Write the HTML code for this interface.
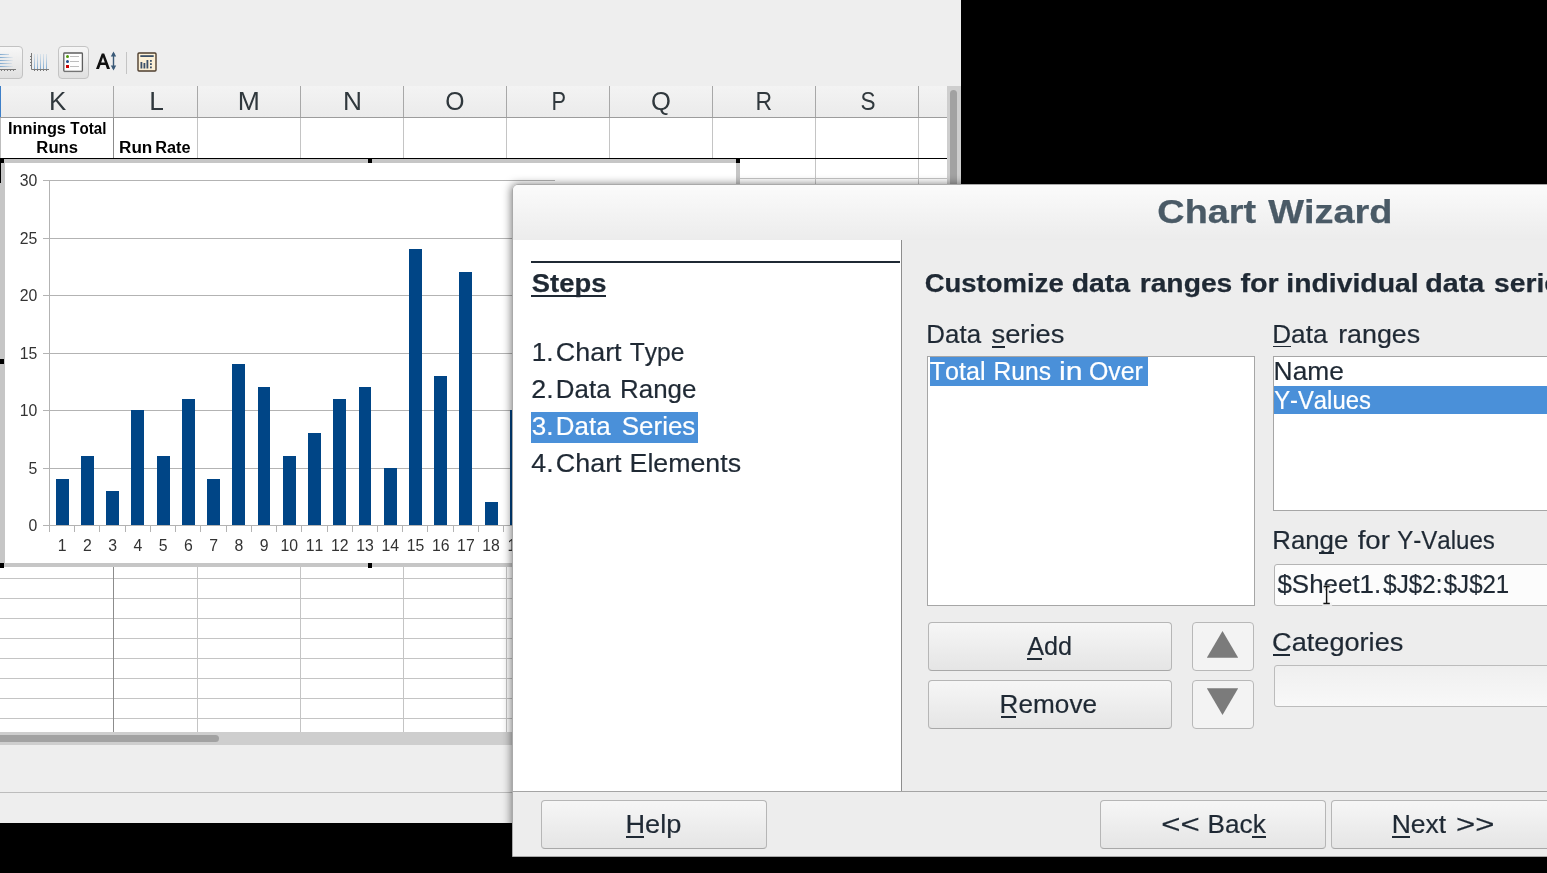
<!DOCTYPE html><html><head><meta charset="utf-8"><title>Chart Wizard</title><style>

*{box-sizing:border-box}
html,body{margin:0;padding:0}
body{width:1547px;height:873px;position:relative;overflow:hidden;background:#000;font-family:"Liberation Sans",sans-serif}
.a{position:absolute}
svg text{font-family:"Liberation Sans",sans-serif;font-kerning:none;white-space:pre}
.gl{will-change:transform}

</style></head><body>
<div class="a" style="left:0;top:0;width:961px;height:823px;background:#eeeeee"></div>
<div class="a" style="left:-10px;top:46px;width:33px;height:33px;border:1px solid #c2c2c2;border-radius:4px;background:linear-gradient(#f7f7f7,#e0e0e0)"></div>
<svg class="a" style="left:0;top:52px" width="20" height="22"><defs><linearGradient id="gh" gradientUnits="userSpaceOnUse" x1="0" x2="14" y1="0" y2="0"><stop offset="0" stop-color="#7fa9cf"/><stop offset="1" stop-color="#7fa9cf" stop-opacity="0"/></linearGradient></defs><g stroke="url(#gh)" stroke-width="1.1"><line x1="0" y1="2.5" x2="9" y2="2.5"/><line x1="0" y1="5.5" x2="13" y2="5.5"/><line x1="0" y1="8.5" x2="13" y2="8.5"/><line x1="0" y1="11.5" x2="12" y2="11.5"/><line x1="0" y1="14.5" x2="13" y2="14.5"/></g><path d="M0 17.5 H16 M1.5 17.5 V19 M4.5 17.5 V19 M7.5 17.5 V19 M10.5 17.5 V19 M13.5 17.5 V19" fill="none" stroke="#7a7a7a" stroke-width="1"/></svg>
<svg class="a" style="left:30px;top:53px" width="20" height="19"><defs><linearGradient id="gv" gradientUnits="userSpaceOnUse" x1="0" x2="0" y1="1" y2="16"><stop offset="0" stop-color="#a9c7e0" stop-opacity="0.3"/><stop offset="1" stop-color="#7fa9cf"/></linearGradient></defs><g stroke="url(#gv)" stroke-width="1"><line x1="4.5" y1="1" x2="4.5" y2="16"/><line x1="7.5" y1="1" x2="7.5" y2="16"/><line x1="10.5" y1="1" x2="10.5" y2="16"/><line x1="13.5" y1="1" x2="13.5" y2="16"/><line x1="16.5" y1="1" x2="16.5" y2="16"/></g><path d="M1.5 0 V16.5 H19 M0 3.5 H1.5 M0 6.5 H1.5 M0 9.5 H1.5 M0 12.5 H1.5 M4.5 16.5 V18 M7.5 16.5 V18 M10.5 16.5 V18 M13.5 16.5 V18 M16.5 16.5 V18" fill="none" stroke="#7a7a7a" stroke-width="1"/></svg>
<div class="a" style="left:58px;top:46px;width:31px;height:33px;border:1px solid #c4c4c4;border-radius:4px;background:linear-gradient(#f6f6f6,#e0e0e0)"></div>
<svg class="a" style="left:63px;top:52px" width="21" height="21"><rect x="0.8" y="1" width="18.6" height="18.4" rx="0.8" fill="#fdfdfd" stroke="#5e5e5e" stroke-width="1.3"/><line x1="1" y1="19.6" x2="19" y2="19.6" stroke="#777" stroke-width="1"/><circle cx="4.5" cy="4.5" r="1.5" fill="#4e9a06"/><circle cx="4.5" cy="9.5" r="1.5" fill="#204a87"/><rect x="3" y="13" width="3" height="3" fill="#cc0000"/><g stroke="#b4b4b4" stroke-width="0.9"><line x1="7" y1="4.5" x2="16" y2="4.5"/><line x1="7" y1="9.5" x2="16" y2="9.5"/><line x1="7" y1="14.5" x2="16" y2="14.5"/></g></svg>
<svg class="a" style="left:94px;top:50px" width="26" height="24"><path d="M2 19 L7.8 3.6 H10.2 L16 19 H13 L11.6 15 H6.4 L5 19 Z M7.2 12.6 H10.8 L9 7.2 Z" fill="#111"/><path d="M19.5 3 V19" stroke="#3b5a78" stroke-width="1.4"/><path d="M16.8 6.5 L19.5 1.5 L22.2 6.5 Z M16.8 15.5 L19.5 20.5 L22.2 15.5 Z" fill="#3b5a78"/></svg>
<div class="a" style="left:126px;top:52px;width:1px;height:22px;background:#c4c4c4"></div>
<svg class="a" style="left:137px;top:52px" width="20" height="20"><rect x="1" y="1" width="18" height="18" rx="1" fill="#fcf0d6" stroke="#4e3e2e" stroke-width="1.4"/><rect x="3.3" y="3.2" width="13.4" height="1.8" fill="#3b5068"/><rect x="3.5" y="10" width="1.8" height="6.5" fill="#3b5068"/><rect x="6.5" y="11" width="1.8" height="5.5" fill="#3b5068"/><rect x="9.5" y="8" width="1.8" height="8.5" fill="#3b5068"/><rect x="13" y="8" width="1.8" height="1.8" fill="#3b5068"/><rect x="13" y="11.2" width="1.8" height="1.8" fill="#3b5068"/><rect x="13" y="14.5" width="1.8" height="1.8" fill="#3b5068"/></svg>
<div class="a" style="left:0;top:86px;width:947px;height:31px;background:linear-gradient(#f3f3f3,#ebebeb)"></div>
<div class="a" style="left:0;top:117px;width:947px;height:1px;background:#9c9c9c"></div>
<div class="a" style="left:0;top:86px;width:1px;height:31px;background:#3d7fc8"></div>
<div class="a" style="left:113px;top:86px;width:1px;height:31px;background:#a8a8a8"></div>
<div class="a" style="left:197px;top:86px;width:1px;height:31px;background:#a8a8a8"></div>
<div class="a" style="left:300px;top:86px;width:1px;height:31px;background:#a8a8a8"></div>
<div class="a" style="left:403px;top:86px;width:1px;height:31px;background:#a8a8a8"></div>
<div class="a" style="left:506px;top:86px;width:1px;height:31px;background:#a8a8a8"></div>
<div class="a" style="left:609px;top:86px;width:1px;height:31px;background:#a8a8a8"></div>
<div class="a" style="left:712px;top:86px;width:1px;height:31px;background:#a8a8a8"></div>
<div class="a" style="left:815px;top:86px;width:1px;height:31px;background:#a8a8a8"></div>
<div class="a" style="left:918px;top:86px;width:1px;height:31px;background:#a8a8a8"></div>
<div class="a" style="left:0;top:118px;width:947px;height:614px;background:#fff"></div>
<div class="a" style="left:0;top:178px;width:947px;height:1px;background:#c4c4c4"></div>
<div class="a" style="left:0;top:198px;width:947px;height:1px;background:#c4c4c4"></div>
<div class="a" style="left:0;top:578px;width:947px;height:1px;background:#c4c4c4"></div>
<div class="a" style="left:0;top:598px;width:947px;height:1px;background:#c4c4c4"></div>
<div class="a" style="left:0;top:618px;width:947px;height:1px;background:#c4c4c4"></div>
<div class="a" style="left:0;top:638px;width:947px;height:1px;background:#c4c4c4"></div>
<div class="a" style="left:0;top:658px;width:947px;height:1px;background:#c4c4c4"></div>
<div class="a" style="left:0;top:678px;width:947px;height:1px;background:#c4c4c4"></div>
<div class="a" style="left:0;top:698px;width:947px;height:1px;background:#c4c4c4"></div>
<div class="a" style="left:0;top:718px;width:947px;height:1px;background:#c4c4c4"></div>
<div class="a" style="left:113px;top:118px;width:1px;height:614px;background:#8c8c8c"></div>
<div class="a" style="left:197px;top:118px;width:1px;height:614px;background:#c4c4c4"></div>
<div class="a" style="left:300px;top:118px;width:1px;height:614px;background:#c4c4c4"></div>
<div class="a" style="left:403px;top:118px;width:1px;height:614px;background:#c4c4c4"></div>
<div class="a" style="left:506px;top:118px;width:1px;height:614px;background:#c4c4c4"></div>
<div class="a" style="left:609px;top:118px;width:1px;height:614px;background:#c4c4c4"></div>
<div class="a" style="left:712px;top:118px;width:1px;height:614px;background:#c4c4c4"></div>
<div class="a" style="left:815px;top:118px;width:1px;height:614px;background:#c4c4c4"></div>
<div class="a" style="left:918px;top:118px;width:1px;height:614px;background:#c4c4c4"></div>
<div class="a" style="left:0;top:158px;width:947px;height:1px;background:#000"></div>
<div class="a" style="left:947px;top:86px;width:14px;height:659px;background:#cecece"></div>
<div class="a" style="left:950px;top:90px;width:7px;height:660px;border-radius:4px;background:#a2a2a2"></div>
<div class="a" style="left:0;top:732px;width:947px;height:13px;background:#cecece"></div>
<div class="a" style="left:-5px;top:735px;width:224px;height:7px;border-radius:4px;background:#a2a2a2"></div>
<div class="a" style="left:0;top:792px;width:961px;height:1px;background:#bcbcbc"></div>
<div class="a" style="left:0;top:159px;width:740px;height:408px;background:#c6c6c6"></div>
<div class="a" style="left:5px;top:163px;width:731px;height:400px;background:#fff"></div>
<div class="a" style="left:0px;top:158px;width:4px;height:5px;background:#000"></div>
<div class="a" style="left:368px;top:158px;width:4px;height:5px;background:#000"></div>
<div class="a" style="left:736px;top:158px;width:4px;height:5px;background:#000"></div>
<div class="a" style="left:0px;top:359px;width:4px;height:5px;background:#000"></div>
<div class="a" style="left:0px;top:563px;width:4px;height:5px;background:#000"></div>
<div class="a" style="left:368px;top:563px;width:4px;height:5px;background:#000"></div>
<div class="a" style="left:0;top:158px;width:1px;height:25px;background:#000"></div>
<div class="a" style="left:0;top:118px;width:1px;height:40px;background:#bdbdbd"></div>
<div class="a" style="left:43px;top:525px;width:512px;height:1px;background:#b3b3b3"></div>
<div class="a" style="left:43px;top:468px;width:512px;height:1px;background:#b3b3b3"></div>
<div class="a" style="left:43px;top:410px;width:512px;height:1px;background:#b3b3b3"></div>
<div class="a" style="left:43px;top:353px;width:512px;height:1px;background:#b3b3b3"></div>
<div class="a" style="left:43px;top:295px;width:512px;height:1px;background:#b3b3b3"></div>
<div class="a" style="left:43px;top:238px;width:512px;height:1px;background:#b3b3b3"></div>
<div class="a" style="left:43px;top:180px;width:512px;height:1px;background:#b3b3b3"></div>
<div class="a" style="left:49px;top:180px;width:1px;height:352px;background:#b3b3b3"></div>
<div class="a" style="left:49.00px;top:525px;width:1px;height:7px;background:#b3b3b3"></div>
<div class="a" style="left:55.80px;top:479.00px;width:12.8px;height:46.00px;background:#004586"></div>
<div class="a" style="left:74.23px;top:525px;width:1px;height:7px;background:#b3b3b3"></div>
<div class="a" style="left:81.03px;top:456.00px;width:12.8px;height:69.00px;background:#004586"></div>
<div class="a" style="left:99.46px;top:525px;width:1px;height:7px;background:#b3b3b3"></div>
<div class="a" style="left:106.26px;top:490.50px;width:12.8px;height:34.50px;background:#004586"></div>
<div class="a" style="left:124.69px;top:525px;width:1px;height:7px;background:#b3b3b3"></div>
<div class="a" style="left:131.49px;top:410.00px;width:12.8px;height:115.00px;background:#004586"></div>
<div class="a" style="left:149.92px;top:525px;width:1px;height:7px;background:#b3b3b3"></div>
<div class="a" style="left:156.72px;top:456.00px;width:12.8px;height:69.00px;background:#004586"></div>
<div class="a" style="left:175.15px;top:525px;width:1px;height:7px;background:#b3b3b3"></div>
<div class="a" style="left:181.95px;top:398.50px;width:12.8px;height:126.50px;background:#004586"></div>
<div class="a" style="left:200.38px;top:525px;width:1px;height:7px;background:#b3b3b3"></div>
<div class="a" style="left:207.18px;top:479.00px;width:12.8px;height:46.00px;background:#004586"></div>
<div class="a" style="left:225.61px;top:525px;width:1px;height:7px;background:#b3b3b3"></div>
<div class="a" style="left:232.41px;top:364.00px;width:12.8px;height:161.00px;background:#004586"></div>
<div class="a" style="left:250.84px;top:525px;width:1px;height:7px;background:#b3b3b3"></div>
<div class="a" style="left:257.64px;top:387.00px;width:12.8px;height:138.00px;background:#004586"></div>
<div class="a" style="left:276.07px;top:525px;width:1px;height:7px;background:#b3b3b3"></div>
<div class="a" style="left:282.87px;top:456.00px;width:12.8px;height:69.00px;background:#004586"></div>
<div class="a" style="left:301.30px;top:525px;width:1px;height:7px;background:#b3b3b3"></div>
<div class="a" style="left:308.10px;top:433.00px;width:12.8px;height:92.00px;background:#004586"></div>
<div class="a" style="left:326.53px;top:525px;width:1px;height:7px;background:#b3b3b3"></div>
<div class="a" style="left:333.33px;top:398.50px;width:12.8px;height:126.50px;background:#004586"></div>
<div class="a" style="left:351.76px;top:525px;width:1px;height:7px;background:#b3b3b3"></div>
<div class="a" style="left:358.56px;top:387.00px;width:12.8px;height:138.00px;background:#004586"></div>
<div class="a" style="left:376.99px;top:525px;width:1px;height:7px;background:#b3b3b3"></div>
<div class="a" style="left:383.79px;top:467.50px;width:12.8px;height:57.50px;background:#004586"></div>
<div class="a" style="left:402.22px;top:525px;width:1px;height:7px;background:#b3b3b3"></div>
<div class="a" style="left:409.02px;top:249.00px;width:12.8px;height:276.00px;background:#004586"></div>
<div class="a" style="left:427.45px;top:525px;width:1px;height:7px;background:#b3b3b3"></div>
<div class="a" style="left:434.25px;top:375.50px;width:12.8px;height:149.50px;background:#004586"></div>
<div class="a" style="left:452.68px;top:525px;width:1px;height:7px;background:#b3b3b3"></div>
<div class="a" style="left:459.48px;top:272.00px;width:12.8px;height:253.00px;background:#004586"></div>
<div class="a" style="left:477.91px;top:525px;width:1px;height:7px;background:#b3b3b3"></div>
<div class="a" style="left:484.71px;top:502.00px;width:12.8px;height:23.00px;background:#004586"></div>
<div class="a" style="left:503.14px;top:525px;width:1px;height:7px;background:#b3b3b3"></div>
<div class="a" style="left:509.94px;top:410.00px;width:12.8px;height:115.00px;background:#004586"></div>
<div class="a" style="left:528.37px;top:525px;width:1px;height:7px;background:#b3b3b3"></div>
<div class="a" style="left:535.17px;top:410.00px;width:12.8px;height:115.00px;background:#004586"></div>
<svg class="a gl" style="left:0;top:0" width="961" height="823"><text x="49.07" y="110.00" font-size="26" font-weight="normal" fill="#30383d" textLength="17.26" lengthAdjust="spacingAndGlyphs" >K</text><text x="149.32" y="110.00" font-size="26" font-weight="normal" fill="#30383d" textLength="14.63" lengthAdjust="spacingAndGlyphs" >L</text><text x="237.81" y="110.00" font-size="26" font-weight="normal" fill="#30383d" textLength="22.12" lengthAdjust="spacingAndGlyphs" >M</text><text x="342.93" y="110.00" font-size="26" font-weight="normal" fill="#30383d" textLength="18.97" lengthAdjust="spacingAndGlyphs" >N</text><text x="445.22" y="110.00" font-size="26" font-weight="normal" fill="#30383d" textLength="19.25" lengthAdjust="spacingAndGlyphs" >O</text><text x="551.60" y="110.00" font-size="26" font-weight="normal" fill="#30383d" textLength="14.54" lengthAdjust="spacingAndGlyphs" >P</text><text x="651.08" y="110.00" font-size="26" font-weight="normal" fill="#30383d" textLength="19.94" lengthAdjust="spacingAndGlyphs" >Q</text><text x="755.41" y="110.00" font-size="26" font-weight="normal" fill="#30383d" textLength="16.58" lengthAdjust="spacingAndGlyphs" >R</text><text x="860.59" y="110.00" font-size="26" font-weight="normal" fill="#30383d" textLength="15.03" lengthAdjust="spacingAndGlyphs" >S</text><text x="7.90" y="133.90" font-size="16" font-weight="bold" fill="#000" textLength="58.06" lengthAdjust="spacingAndGlyphs" >Innings</text><text x="70.35" y="133.90" font-size="16" font-weight="bold" fill="#000" textLength="36.09" lengthAdjust="spacingAndGlyphs" >Total</text><text x="36.38" y="152.60" font-size="16" font-weight="bold" fill="#000" textLength="41.59" lengthAdjust="spacingAndGlyphs" >Runs</text><text x="119.04" y="152.60" font-size="16" font-weight="bold" fill="#000" textLength="33.28" lengthAdjust="spacingAndGlyphs" >Run</text><text x="155.30" y="152.60" font-size="16" font-weight="bold" fill="#000" textLength="35.23" lengthAdjust="spacingAndGlyphs" >Rate</text><text x="37.40" y="531.00" font-size="15.8" font-weight="normal" fill="#333" text-anchor="end">0</text><text x="37.40" y="473.50" font-size="15.8" font-weight="normal" fill="#333" text-anchor="end">5</text><text x="37.40" y="416.00" font-size="15.8" font-weight="normal" fill="#333" text-anchor="end">10</text><text x="37.40" y="358.50" font-size="15.8" font-weight="normal" fill="#333" text-anchor="end">15</text><text x="37.40" y="301.00" font-size="15.8" font-weight="normal" fill="#333" text-anchor="end">20</text><text x="37.40" y="243.50" font-size="15.8" font-weight="normal" fill="#333" text-anchor="end">25</text><text x="37.40" y="186.00" font-size="15.8" font-weight="normal" fill="#333" text-anchor="end">30</text><text x="62.22" y="550.90" font-size="15.8" font-weight="normal" fill="#333" text-anchor="middle">1</text><text x="87.44" y="550.90" font-size="15.8" font-weight="normal" fill="#333" text-anchor="middle">2</text><text x="112.67" y="550.90" font-size="15.8" font-weight="normal" fill="#333" text-anchor="middle">3</text><text x="137.91" y="550.90" font-size="15.8" font-weight="normal" fill="#333" text-anchor="middle">4</text><text x="163.14" y="550.90" font-size="15.8" font-weight="normal" fill="#333" text-anchor="middle">5</text><text x="188.37" y="550.90" font-size="15.8" font-weight="normal" fill="#333" text-anchor="middle">6</text><text x="213.59" y="550.90" font-size="15.8" font-weight="normal" fill="#333" text-anchor="middle">7</text><text x="238.83" y="550.90" font-size="15.8" font-weight="normal" fill="#333" text-anchor="middle">8</text><text x="264.06" y="550.90" font-size="15.8" font-weight="normal" fill="#333" text-anchor="middle">9</text><text x="289.29" y="550.90" font-size="15.8" font-weight="normal" fill="#333" text-anchor="middle">10</text><text x="314.52" y="550.90" font-size="15.8" font-weight="normal" fill="#333" text-anchor="middle">11</text><text x="339.75" y="550.90" font-size="15.8" font-weight="normal" fill="#333" text-anchor="middle">12</text><text x="364.98" y="550.90" font-size="15.8" font-weight="normal" fill="#333" text-anchor="middle">13</text><text x="390.21" y="550.90" font-size="15.8" font-weight="normal" fill="#333" text-anchor="middle">14</text><text x="415.44" y="550.90" font-size="15.8" font-weight="normal" fill="#333" text-anchor="middle">15</text><text x="440.67" y="550.90" font-size="15.8" font-weight="normal" fill="#333" text-anchor="middle">16</text><text x="465.90" y="550.90" font-size="15.8" font-weight="normal" fill="#333" text-anchor="middle">17</text><text x="491.13" y="550.90" font-size="15.8" font-weight="normal" fill="#333" text-anchor="middle">18</text><text x="516.36" y="550.90" font-size="15.8" font-weight="normal" fill="#333" text-anchor="middle">19</text><text x="541.59" y="550.90" font-size="15.8" font-weight="normal" fill="#333" text-anchor="middle">20</text></svg>
<div class="a" style="left:512px;top:184px;width:1100px;height:673px;border-radius:6px 6px 0 0;box-shadow:-1px 0 9px 0 rgba(0,0,0,0.5)"></div>
<div class="a" style="left:512px;top:184px;width:1100px;height:673px;border-radius:6px 6px 0 0;background:#ededed;border:1px solid #a9a9a9;overflow:hidden">
<div class="a" style="left:0;top:0;width:1100px;height:55px;background:linear-gradient(#fbfbfb,#ececec)"></div>
</div>
<div class="a" style="left:513px;top:240px;width:389px;height:551px;background:#fff;border-right:1px solid #8e8e8e"></div>
<div class="a" style="left:513px;top:791px;width:1040px;height:1px;background:#a4a4a4"></div>
<div class="a" style="left:531px;top:261px;width:369px;height:2px;background:#1f2934"></div>
<div class="a" style="left:531px;top:295px;width:75px;height:2px;background:#1f2934"></div>
<div class="a" style="left:531px;top:412px;width:167px;height:31px;background:#4a90d9"></div>
<div class="a" style="left:927px;top:356px;width:328px;height:250px;background:#fff;border:1px solid #a6a6a6"></div>
<div class="a" style="left:930px;top:357px;width:218px;height:29px;background:#4a90d9"></div>
<div class="a" style="left:1273px;top:356px;width:300px;height:155px;background:#fff;border:1px solid #a6a6a6"></div>
<div class="a" style="left:1274px;top:386px;width:300px;height:28px;background:#4a90d9"></div>
<div class="a" style="left:1274px;top:564px;width:300px;height:42px;background:#fcfcfc;border:1px solid #b4b4b4;border-radius:3px"></div>
<div class="a" style="left:1274px;top:665px;width:300px;height:42px;background:linear-gradient(#efefef,#f8f8f8);border:1px solid #bcbcbc;border-radius:3px"></div>
<div class="a" style="left:928px;top:622px;width:244px;height:49px;border:1px solid #b6b6b6;border-bottom-color:#a8a8a8;border-radius:4px;background:linear-gradient(#f6f6f6,#e5e5e5)"></div>
<div class="a" style="left:928px;top:680px;width:244px;height:49px;border:1px solid #b6b6b6;border-bottom-color:#a8a8a8;border-radius:4px;background:linear-gradient(#f6f6f6,#e5e5e5)"></div>
<div class="a" style="left:1192px;top:622px;width:62px;height:49px;border:1px solid #b8b8b8;border-radius:4px;background:#f3f3f3"></div>
<svg class="a" style="left:1206px;top:630px" width="33" height="29"><path d="M0.8 27.8 L16.5 1 L32.2 27.8 Z" fill="#7b7b7b"/></svg>
<div class="a" style="left:1192px;top:680px;width:62px;height:49px;border:1px solid #b8b8b8;border-radius:4px;background:#f3f3f3"></div>
<svg class="a" style="left:1206px;top:687px" width="33" height="29"><path d="M0.8 1.2 L16.5 28 L32.2 1.2 Z" fill="#7b7b7b"/></svg>
<div class="a" style="left:541px;top:800px;width:226px;height:49px;border:1px solid #b6b6b6;border-bottom-color:#a8a8a8;border-radius:4px;background:linear-gradient(#f6f6f6,#e5e5e5)"></div>
<div class="a" style="left:1100px;top:800px;width:226px;height:49px;border:1px solid #b6b6b6;border-bottom-color:#a8a8a8;border-radius:4px;background:linear-gradient(#f6f6f6,#e5e5e5)"></div>
<div class="a" style="left:1331px;top:800px;width:226px;height:49px;border:1px solid #b6b6b6;border-bottom-color:#a8a8a8;border-radius:4px;background:linear-gradient(#f6f6f6,#e5e5e5)"></div>
<div class="a" style="left:992.3px;top:346.1px;width:12.7px;height:1.7px;background:#1f2934"></div>
<div class="a" style="left:1273.2px;top:345.8px;width:17.6px;height:1.7px;background:#1f2934"></div>
<div class="a" style="left:1319.1px;top:552.2px;width:14.9px;height:1.7px;background:#1f2934"></div>
<div class="a" style="left:1272.9px;top:654.3px;width:17.2px;height:1.7px;background:#1f2934"></div>
<div class="a" style="left:1027.2px;top:657.9px;width:14.8px;height:1.7px;background:#1f2934"></div>
<div class="a" style="left:1000.9px;top:716.0px;width:14.7px;height:1.7px;background:#1f2934"></div>
<div class="a" style="left:626.1px;top:836.0px;width:17.9px;height:1.7px;background:#1f2934"></div>
<div class="a" style="left:1252.1px;top:836.1px;width:13.9px;height:1.7px;background:#1f2934"></div>
<div class="a" style="left:1392.2px;top:836.1px;width:17.6px;height:1.7px;background:#1f2934"></div>
<svg class="a gl" style="left:0;top:0" width="1547" height="873"><defs><clipPath id="c1"><rect x="929" y="356" width="219" height="30"/></clipPath></defs><text x="1157.39" y="222.90" font-size="33" font-weight="bold" fill="#4a5a66" stroke="#4a5a66" stroke-width="0.25" textLength="98.79" lengthAdjust="spacingAndGlyphs" >Chart</text><text x="1268.20" y="222.90" font-size="33" font-weight="bold" fill="#4a5a66" stroke="#4a5a66" stroke-width="0.25" textLength="124.36" lengthAdjust="spacingAndGlyphs" >Wizard</text><text x="531.85" y="291.90" font-size="25" font-weight="bold" fill="#1f2934" stroke="#1f2934" stroke-width="0.25" textLength="74.55" lengthAdjust="spacingAndGlyphs" >Steps</text><text x="531.73" y="360.80" font-size="25.5" font-weight="normal" fill="#1f2934" stroke="#1f2934" stroke-width="0.2" textLength="21.83" lengthAdjust="spacingAndGlyphs" >1.</text><text x="555.85" y="360.80" font-size="25.5" font-weight="normal" fill="#1f2934" stroke="#1f2934" stroke-width="0.2" textLength="65.75" lengthAdjust="spacingAndGlyphs" >Chart</text><text x="629.65" y="360.80" font-size="25.5" font-weight="normal" fill="#1f2934" stroke="#1f2934" stroke-width="0.2" textLength="54.68" lengthAdjust="spacingAndGlyphs" >Type</text><text x="531.26" y="397.80" font-size="25.5" font-weight="normal" fill="#1f2934" stroke="#1f2934" stroke-width="0.2" textLength="22.36" lengthAdjust="spacingAndGlyphs" >2.</text><text x="555.86" y="397.80" font-size="25.5" font-weight="normal" fill="#1f2934" stroke="#1f2934" stroke-width="0.2" textLength="54.67" lengthAdjust="spacingAndGlyphs" >Data</text><text x="620.06" y="397.80" font-size="25.5" font-weight="normal" fill="#1f2934" stroke="#1f2934" stroke-width="0.2" textLength="76.34" lengthAdjust="spacingAndGlyphs" >Range</text><text x="531.82" y="434.70" font-size="25.5" font-weight="normal" fill="#fff" stroke="#fff" stroke-width="0.2" textLength="21.73" lengthAdjust="spacingAndGlyphs" >3.</text><text x="555.86" y="434.70" font-size="25.5" font-weight="normal" fill="#fff" stroke="#fff" stroke-width="0.2" textLength="54.67" lengthAdjust="spacingAndGlyphs" >Data</text><text x="621.83" y="434.70" font-size="25.5" font-weight="normal" fill="#fff" stroke="#fff" stroke-width="0.2" textLength="73.48" lengthAdjust="spacingAndGlyphs" >Series</text><text x="531.30" y="471.50" font-size="25.5" font-weight="normal" fill="#1f2934" stroke="#1f2934" stroke-width="0.2" textLength="22.32" lengthAdjust="spacingAndGlyphs" >4.</text><text x="555.85" y="471.50" font-size="25.5" font-weight="normal" fill="#1f2934" stroke="#1f2934" stroke-width="0.2" textLength="65.75" lengthAdjust="spacingAndGlyphs" >Chart</text><text x="629.59" y="471.50" font-size="25.5" font-weight="normal" fill="#1f2934" stroke="#1f2934" stroke-width="0.2" textLength="111.44" lengthAdjust="spacingAndGlyphs" >Elements</text><text x="924.70" y="291.60" font-size="25" font-weight="bold" fill="#1f2934" stroke="#1f2934" stroke-width="0.25" textLength="138.99" lengthAdjust="spacingAndGlyphs" >Customize</text><text x="1071.76" y="291.60" font-size="25" font-weight="bold" fill="#1f2934" stroke="#1f2934" stroke-width="0.25" textLength="58.32" lengthAdjust="spacingAndGlyphs" >data</text><text x="1139.66" y="291.60" font-size="25" font-weight="bold" fill="#1f2934" stroke="#1f2934" stroke-width="0.25" textLength="92.67" lengthAdjust="spacingAndGlyphs" >ranges</text><text x="1240.40" y="291.60" font-size="25" font-weight="bold" fill="#1f2934" stroke="#1f2934" stroke-width="0.25" textLength="38.23" lengthAdjust="spacingAndGlyphs" >for</text><text x="1286.31" y="291.60" font-size="25" font-weight="bold" fill="#1f2934" stroke="#1f2934" stroke-width="0.25" textLength="132.38" lengthAdjust="spacingAndGlyphs" >individual</text><text x="1425.15" y="291.60" font-size="25" font-weight="bold" fill="#1f2934" stroke="#1f2934" stroke-width="0.25" textLength="59.03" lengthAdjust="spacingAndGlyphs" >data</text><text x="1493.91" y="291.60" font-size="25" font-weight="bold" fill="#1f2934" stroke="#1f2934" stroke-width="0.25" textLength="81.83" lengthAdjust="spacingAndGlyphs" >series</text><text x="926.36" y="343.00" font-size="25.5" font-weight="normal" fill="#1f2934" stroke="#1f2934" stroke-width="0.2" textLength="54.67" lengthAdjust="spacingAndGlyphs" >Data</text><text x="991.55" y="343.00" font-size="25.5" font-weight="normal" fill="#1f2934" stroke="#1f2934" stroke-width="0.2" textLength="72.81" lengthAdjust="spacingAndGlyphs" >series</text><text x="1272.24" y="342.70" font-size="25.5" font-weight="normal" fill="#1f2934" stroke="#1f2934" stroke-width="0.2" textLength="55.19" lengthAdjust="spacingAndGlyphs" >Data</text><text x="1338.15" y="342.70" font-size="25.5" font-weight="normal" fill="#1f2934" stroke="#1f2934" stroke-width="0.2" textLength="82.09" lengthAdjust="spacingAndGlyphs" >ranges</text><g clip-path="url(#c1)"><text x="929.73" y="380.00" font-size="25.5" font-weight="normal" fill="#fff" stroke="#fff" stroke-width="0.2" textLength="55.89" lengthAdjust="spacingAndGlyphs" >Total</text><text x="993.47" y="380.00" font-size="25.5" font-weight="normal" fill="#fff" stroke="#fff" stroke-width="0.2" textLength="57.50" lengthAdjust="spacingAndGlyphs" >Runs</text><text x="1058.96" y="380.00" font-size="25.5" font-weight="normal" fill="#fff" stroke="#fff" stroke-width="0.2" textLength="23.54" lengthAdjust="spacingAndGlyphs" >in</text><text x="1088.92" y="380.00" font-size="25.5" font-weight="normal" fill="#fff" stroke="#fff" stroke-width="0.2" textLength="53.93" lengthAdjust="spacingAndGlyphs" >Over</text></g><text x="1273.62" y="379.60" font-size="25.5" font-weight="normal" fill="#1f2934" stroke="#1f2934" stroke-width="0.2" textLength="70.30" lengthAdjust="spacingAndGlyphs" >Name</text><text x="1274.16" y="409.00" font-size="25.5" font-weight="normal" fill="#fff" stroke="#fff" stroke-width="0.2" textLength="96.67" lengthAdjust="spacingAndGlyphs" >Y-Values</text><text x="1272.27" y="548.80" font-size="25.5" font-weight="normal" fill="#1f2934" stroke="#1f2934" stroke-width="0.2" textLength="76.03" lengthAdjust="spacingAndGlyphs" >Range</text><text x="1357.65" y="548.80" font-size="25.5" font-weight="normal" fill="#1f2934" stroke="#1f2934" stroke-width="0.2" textLength="32.26" lengthAdjust="spacingAndGlyphs" >for</text><text x="1397.16" y="548.80" font-size="25.5" font-weight="normal" fill="#1f2934" stroke="#1f2934" stroke-width="0.2" textLength="97.78" lengthAdjust="spacingAndGlyphs" >Y-Values</text><text x="1277.44" y="592.60" font-size="25.5" font-weight="normal" fill="#1f2934" stroke="#1f2934" stroke-width="0.2" textLength="103.80" lengthAdjust="spacingAndGlyphs" >$Sheet1.</text><text x="1383.36" y="592.60" font-size="25.5" font-weight="normal" fill="#1f2934" stroke="#1f2934" stroke-width="0.2" textLength="59.02" lengthAdjust="spacingAndGlyphs" >$J$2:</text><text x="1443.76" y="592.60" font-size="25.5" font-weight="normal" fill="#1f2934" stroke="#1f2934" stroke-width="0.2" textLength="65.48" lengthAdjust="spacingAndGlyphs" >$J$21</text><text x="1272.04" y="651.00" font-size="25.5" font-weight="normal" fill="#1f2934" stroke="#1f2934" stroke-width="0.2" textLength="131.31" lengthAdjust="spacingAndGlyphs" >Categories</text><text x="1027.14" y="655.00" font-size="25.5" font-weight="normal" fill="#1f2934" stroke="#1f2934" stroke-width="0.2" textLength="44.84" lengthAdjust="spacingAndGlyphs" >Add</text><text x="999.64" y="712.50" font-size="25.5" font-weight="normal" fill="#1f2934" stroke="#1f2934" stroke-width="0.2" textLength="97.37" lengthAdjust="spacingAndGlyphs" >Remove</text><text x="625.46" y="832.90" font-size="25.5" font-weight="normal" fill="#1f2934" stroke="#1f2934" stroke-width="0.2" textLength="55.83" lengthAdjust="spacingAndGlyphs" >Help</text><text x="1161.24" y="832.70" font-size="25.5" font-weight="normal" fill="#1f2934" stroke="#1f2934" stroke-width="0.2" textLength="38.51" lengthAdjust="spacingAndGlyphs" >&lt;&lt;</text><text x="1207.64" y="832.70" font-size="25.5" font-weight="normal" fill="#1f2934" stroke="#1f2934" stroke-width="0.2" textLength="58.16" lengthAdjust="spacingAndGlyphs" >Back</text><text x="1391.71" y="832.70" font-size="25.5" font-weight="normal" fill="#1f2934" stroke="#1f2934" stroke-width="0.2" textLength="54.49" lengthAdjust="spacingAndGlyphs" >Next</text><text x="1456.14" y="832.70" font-size="25.5" font-weight="normal" fill="#1f2934" stroke="#1f2934" stroke-width="0.2" textLength="38.51" lengthAdjust="spacingAndGlyphs" >&gt;&gt;</text><path d="M1323.6 586.5 H1329.6 M1326.6 586.5 V603.5 M1323.4 603.5 H1329.8" stroke="#f4f4f4" stroke-width="3.4" fill="none" stroke-linecap="square" transform="translate(0.6,0.6)"/><path d="M1323.6 586.5 H1329.6 M1326.6 586.5 V603.5 M1323.4 603.5 H1329.8" stroke="#111" stroke-width="1.4" fill="none"/></svg>
</body></html>
